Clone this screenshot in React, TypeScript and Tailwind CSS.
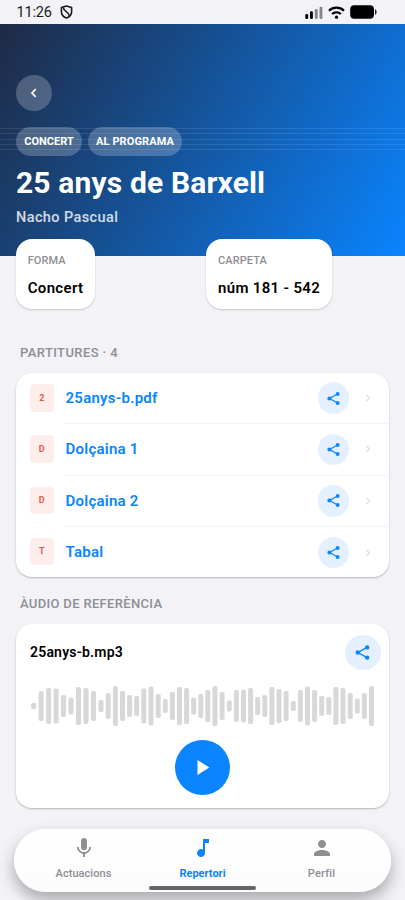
import React from 'react';

interface ShareButtonProps {
  size: 'sm' | 'md';
}

interface SheetRowProps {
  title: string;
  initial: string;
  last: boolean;
}

interface InfoCardProps {
  label: string;
  value: string;
  className: string;
}

const sheets = [
  { title: '25anys-b.pdf', initial: '2' },
  { title: 'Dolçaina 1', initial: 'D' },
  { title: 'Dolçaina 2', initial: 'D' },
  { title: 'Tabal', initial: 'T' },
];

// [centre x, height] of every bar
const bars = [
  [3.7, 6.5], [11.1, 30], [18.6, 36], [26.1, 35], [33.5, 22], [41, 17], [48.5, 38], [56, 36],
  [63.5, 30], [71, 12], [78.2, 26], [85.4, 40], [92.5, 30], [99.6, 22], [106.7, 20], [113.8, 35],
  [121, 39], [128.2, 24], [135.3, 14], [142.4, 28], [149.5, 38], [156.6, 36], [163.7, 17], [170.8, 24],
  [177.8, 32], [185, 40], [192.1, 28], [199.3, 11], [206.4, 32], [213.5, 33], [220.6, 36], [227.7, 18],
  [234.8, 22], [241.9, 38], [249, 34], [256.1, 30], [263.3, 10], [270.4, 32], [277.5, 39], [284.6, 32],
  [291.7, 20], [298.8, 18], [305.9, 38], [313, 36], [320.2, 26], [327.3, 15], [334.4, 26], [341.5, 40],
];

const StatusBar: React.FC = () => (
  <div className="flex h-6 items-center justify-between pl-[16.5px] pr-7">
    <div className="flex items-center">
      <span className="w-[43px] pt-px text-[14.5px] leading-[23px] tracking-[-0.2px] text-[#202024]">11:26</span>
      <svg className="h-[14px] w-[13px]" viewBox="0 0 13 14" fill="none" stroke="#1b1b1f" strokeWidth="1.6">
        <path d="M6.5 1 11.6 2.6V6.7C11.6 9.7 9.4 12 6.5 13 3.6 12 1.4 9.7 1.4 6.7V2.6Z" strokeLinejoin="round" />
        <path d="M3.3 2.6C3.4 6.8 9.3 6.6 9.4 11" />
      </svg>
    </div>
    <div className="flex items-center">
      <svg className="h-[13px] w-[18px]" viewBox="0 0 18 13">
        <rect x="0.3" y="8" width="2.9" height="5" rx="1.2" />
        <rect x="5" y="5.3" width="2.9" height="7.7" rx="1.2" />
        <rect x="9.8" y="2.9" width="2.9" height="10.1" rx="1.2" fill="#87878b" />
        <rect x="14.5" y="0.8" width="2.9" height="12.2" rx="1.2" fill="#87878b" />
      </svg>
      <svg className="ml-[5px] h-[13px] w-[17px]" viewBox="0 0 17 13" fill="none" stroke="#000" strokeWidth="2.2">
        <path d="M1 4.7C5.2 .7 11.8 .7 16 4.7" />
        <path d="M4.1 8C6.6 5.7 10.4 5.7 12.9 8" />
        <circle cx="8.5" cy="11.2" r="1.6" fill="#000" stroke="none" />
      </svg>
      <svg className="ml-[5px] h-[14px] w-[27px]" viewBox="0 0 27 14">
        <rect x="0.2" y="0.3" width="23.8" height="13.4" rx="4" />
        <path d="M25.1 4.2C27 4.7 27 9.3 25.1 9.8Z" />
      </svg>
    </div>
  </div>
);

const ShareButton: React.FC<ShareButtonProps> = ({ size }) => (
  <button
    type="button"
    className={`flex shrink-0 items-center justify-center rounded-full bg-[#e4f0ff] ${
      size === 'md' ? 'size-[35.5px]' : 'size-[31.5px]'
    }`}
  >
    <svg
      className={size === 'md' ? 'size-[17px]' : 'size-[15px]'}
      viewBox="0 0 24 24"
      fill="#0a84ff"
      stroke="#0a84ff"
    >
      <path d="M18.5 4.8 5.5 12 18.5 19.2" fill="none" strokeWidth="2" />
      <circle cx="18.6" cy="4.8" r="3.1" stroke="none" />
      <circle cx="5.4" cy="12" r="3.2" stroke="none" />
      <circle cx="18.6" cy="19.2" r="3.1" stroke="none" />
    </svg>
  </button>
);

const InfoCard: React.FC<InfoCardProps> = ({ label, value, className }) => (
  <div
    className={`h-[70.5px] rounded-2xl bg-white px-[11.7px] pt-[15px] shadow-[0_1px_2px_rgba(0,0,0,0.18)] ${className}`}
  >
    <div className="text-[11px] font-medium leading-[13px] tracking-[0.1px] text-[#8e8e93]">{label}</div>
    <div className="mt-[12px] whitespace-nowrap text-[15px] font-semibold leading-[18px] tracking-[0.33px] text-black">
      {value}
    </div>
  </div>
);

const SheetRow: React.FC<SheetRowProps> = ({ title, initial, last }) => (
  <div className="flex h-[51.33px] pl-[14px]">
    <div className="mt-[11px] flex h-[27.5px] w-[23.5px] items-center justify-center rounded-[4px] bg-[#fdeeeb] pt-px text-[9px] font-bold text-[#e25b45]">
      {initial}
    </div>
    <div
      className={`ml-[10px] flex flex-1 items-center pl-[2px] pr-[14.5px] ${
        last ? '' : 'border-b border-[#f4f4f6]'
      }`}
    >
      <span className="flex-1 text-[15px] font-semibold tracking-[0.25px] text-[#0a84ff]">{title}</span>
      <ShareButton size="sm" />
      <svg className="ml-[14px] h-3 w-[11px]" viewBox="0 0 11 12" fill="none" stroke="#e0e0e4" strokeWidth="1.2">
        <path d="m3.4 3 3.2 3-3.2 3" />
      </svg>
    </div>
  </div>
);

const Waveform: React.FC = () => (
  <svg className="h-[42px] w-[345px]" viewBox="0 0 345 42" fill="#d8d8d8">
    {bars.map(([x, height]) => (
      <rect key={x} x={x - 2.5} y={21 - height / 2} width="5" height={height} rx="1.8" />
    ))}
  </svg>
);

const TabBar: React.FC = () => (
  <nav className="absolute left-[14px] top-[829px] grid h-[63px] w-[377px] grid-cols-3 rounded-full bg-gradient-to-b from-white to-[#fcfcfd] px-[10px] text-[11px] font-medium text-[#8e8e93] shadow-[0_8px_16px_rgba(0,0,0,0.3)]">
    <div className="flex flex-col items-center pt-[7px]">
      <svg className="size-6" viewBox="0 0 24 24" fill="currentColor">
        <path d="M12 14.2c1.7 0 3-1.3 3-3V5c0-1.7-1.3-3-3-3S9 3.3 9 5v6.2c0 1.7 1.3 3 3 3Zm5.3-3.2c0 3-2.5 5.1-5.3 5.1S6.7 14 6.7 11H5c0 3.4 2.7 6.2 6 6.7V21h2v-3.3c3.3-.5 6-3.3 6-6.7Z" />
      </svg>
      <span className="mt-[7px] leading-[13px] tracking-[0.05px]">Actuacions</span>
    </div>
    <div className="flex flex-col items-center pt-[7px] text-[#0a84ff]">
      <svg className="size-6" viewBox="0 0 24 24" fill="currentColor">
        <path d="M12 3v10.55A4 4 0 1 0 14 17V7h4V3Z" />
      </svg>
      <span className="mt-[7px] font-bold leading-[13px]">Repertori</span>
    </div>
    <div className="flex flex-col items-center pt-[7px]">
      <svg className="size-6" viewBox="0 0 24 24" fill="currentColor">
        <path d="M12 12c2.21 0 4-1.79 4-4s-1.79-4-4-4-4 1.79-4 4 1.79 4 4 4Zm0 2c-2.67 0-8 1.34-8 4v2h16v-2c0-2.66-5.33-4-8-4Z" />
      </svg>
      <span className="mt-[7px] leading-[13px] tracking-[0.2px]">Perfil</span>
    </div>
    <div className="absolute left-[135px] top-[57px] h-1 w-[107px] rounded-full bg-[#656567]" />
  </nav>
);

export default function App() {
  return (
    <div className="relative h-[900px] w-[405px] overflow-hidden bg-[#f2f2f7] font-['Roboto',sans-serif]">
      <StatusBar />

      <header className="relative h-[232px] bg-[linear-gradient(120deg,#1f2a44_0%,#0a84ff_100%)] px-4 pt-[51px] text-white">
        <div className="absolute inset-x-0 top-[104px] flex flex-col gap-[4.3px]">
          {[0, 1, 2, 3, 4].map((line) => (
            <div key={line} className="h-px bg-white/10" />
          ))}
        </div>
        <button type="button" className="flex size-9 items-center justify-center rounded-full bg-white/22">
          <svg className="h-3 w-3" viewBox="0 0 12 12" fill="none" stroke="white" strokeWidth="1.7">
            <path d="M7.7 2.2 4 6l3.7 3.8" />
          </svg>
        </button>
        <div className="mt-4 flex gap-[6px] text-[11px] font-bold">
          <span className="flex h-[29px] w-[66px] items-center justify-center rounded-full bg-white/22 pt-px">
            CONCERT
          </span>
          <span className="flex h-[29px] w-[94px] items-center justify-center rounded-full bg-white/22 pt-px tracking-[0.1px]">
            AL PROGRAMA
          </span>
        </div>
        <h1 className="mt-[9px] whitespace-nowrap text-[30px] font-bold leading-[36px] tracking-[0.15px]">
          25 anys de Barxell
        </h1>
        <p className="mt-[8px] text-[14.5px] font-medium leading-[18px] tracking-[0.4px] text-white/80">
          Nacho Pascual
        </p>
      </header>

      <div className="relative -mt-[17.5px] flex pl-4">
        <InfoCard label="FORMA" value="Concert" className="w-[79.3px]" />
        <InfoCard label="CARPETA" value="núm 181 - 542" className="ml-[111px] w-[125.5px]" />
      </div>

      <section className="px-4 pt-9">
        <h2 className="pl-1 text-[13px] font-medium leading-[15px] tracking-[0.4px] text-[#8e8e93]">
          PARTITURES · 4
        </h2>
        <div className="mt-[13px] h-[204px] w-[372.5px] overflow-hidden rounded-2xl bg-white shadow-[0_1px_2px_rgba(0,0,0,0.25)]">
          {sheets.map((sheet, index) => (
            <SheetRow key={sheet.title} {...sheet} last={index === sheets.length - 1} />
          ))}
        </div>
      </section>

      <section className="px-4 pt-[18.5px]">
        <h2 className="pl-1 text-[13px] font-medium leading-[15px] tracking-[0.33px] text-[#8e8e93]">
          ÀUDIO DE REFERÈNCIA
        </h2>
        <div className="mt-[13px] flex h-[184.5px] w-[372.5px] flex-col items-center rounded-2xl bg-white pt-[11px] shadow-[0_1px_2px_rgba(0,0,0,0.25)]">
          <div className="flex w-full items-center justify-between pl-[14px] pr-[7.8px]">
            <span className="pt-px text-[14px] font-semibold tracking-[0.2px] text-black">25anys-b.mp3</span>
            <ShareButton size="md" />
          </div>
          <div className="mt-[14.5px] w-full pl-[14px]">
            <Waveform />
          </div>
          <button type="button" className="mt-[13px] flex size-[55px] items-center justify-center rounded-full bg-[#0a84ff]">
            <svg className="ml-[3px] h-[15px] w-[13px]" viewBox="0 0 13 15" fill="white">
              <path d="M.5 0v15l11.8-7.5Z" />
            </svg>
          </button>
        </div>
      </section>

      <TabBar />
    </div>
  );
}
